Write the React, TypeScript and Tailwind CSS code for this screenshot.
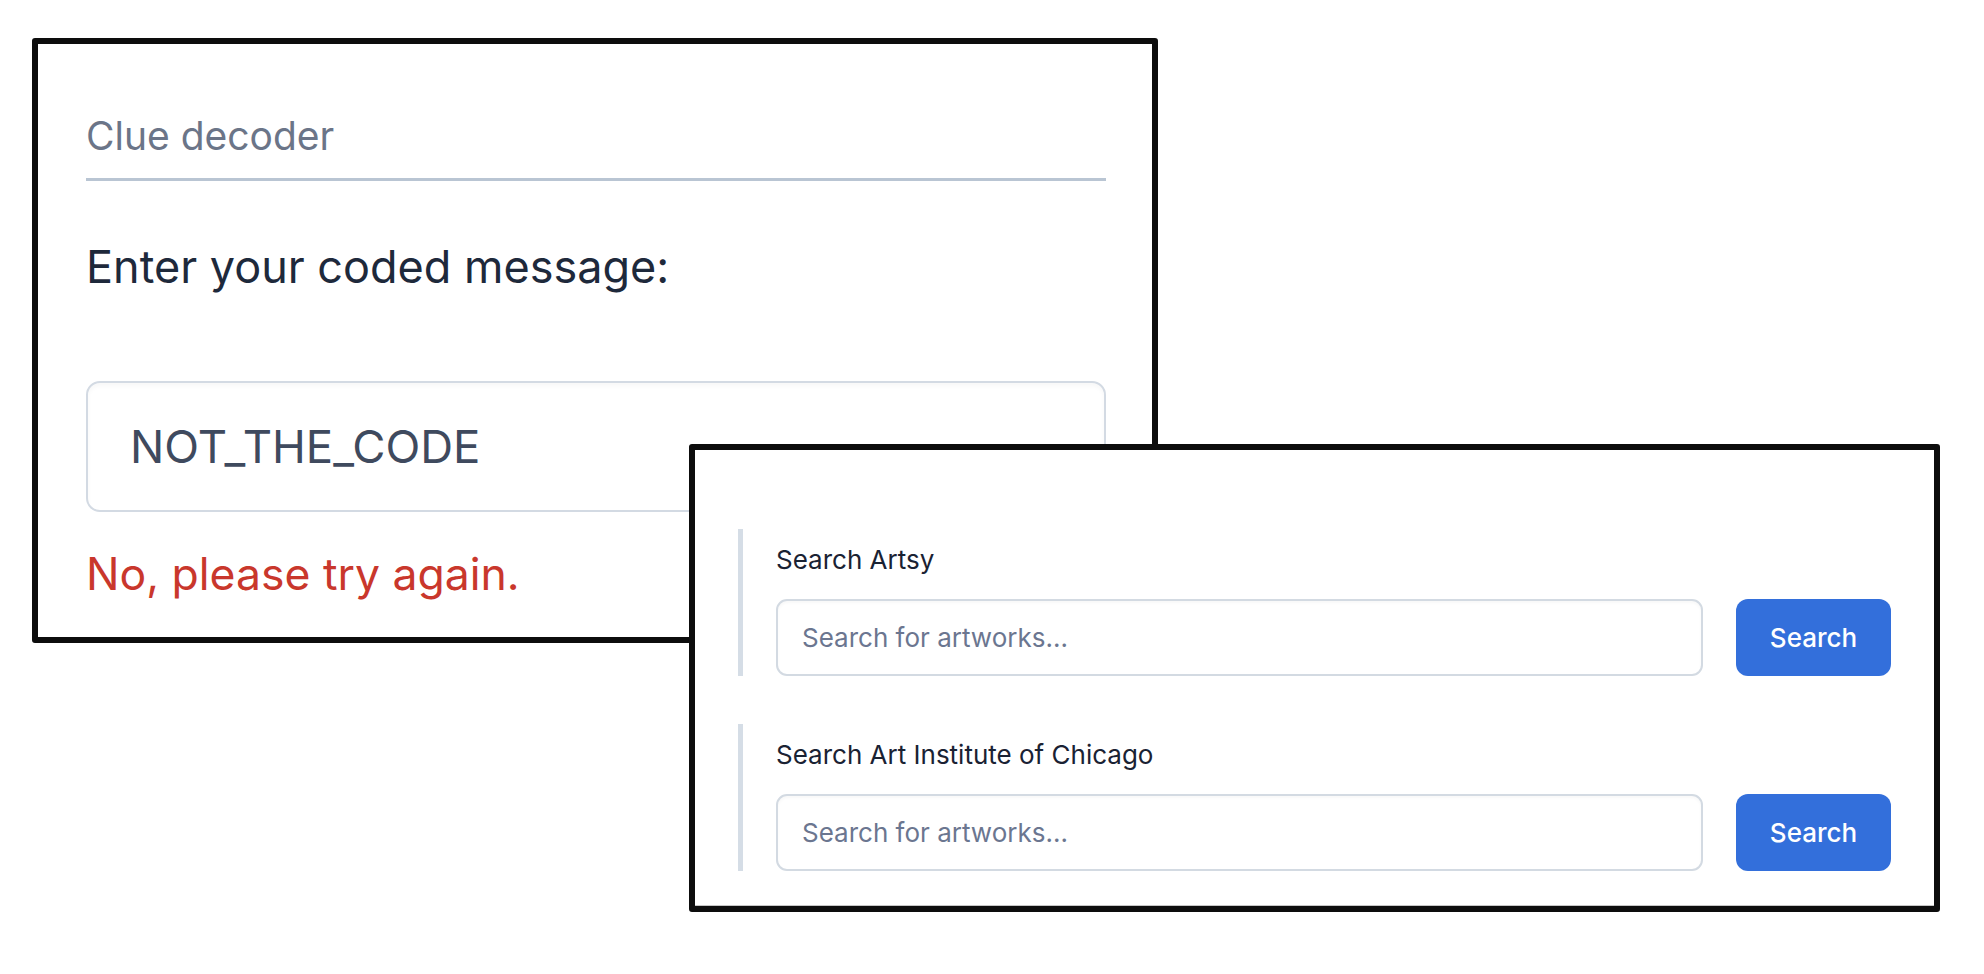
import React from "react"

const SearchGroup = ({ label }: { label: string }) => {
  return (
    <div className="flex">
      <div className="w-[5px] bg-[#d5dde6]" />
      <div className="flex-1 pl-[33px] pt-[15px]">
        <div className="text-[26px] leading-[32px] text-[#1a2233]">{label}</div>
        <div className="mt-[23px] flex gap-[33px]">
          <input
            type="text"
            placeholder="Search for artworks..."
            className="h-[77px] flex-1 rounded-[11px] border-2 border-[#d3dae2] bg-white pl-[24px] text-[26px] text-[#1a2233] shadow-[inset_0_2px_3px_rgba(0,0,0,0.03)] outline-none placeholder:text-[#6b7690]"
          />
          <button className="h-[77px] w-[155px] rounded-[12px] bg-[#336fdb] text-[26px] font-medium text-white">
            Search
          </button>
        </div>
      </div>
    </div>
  )
}

export default function App() {
  return (
    <div className="relative h-[974px] w-[1984px] overflow-hidden bg-white font-['Inter',sans-serif]">
      {/* clue decoder card */}
      <div className="ml-[32px] mt-[38px] h-[605px] w-[1126px] rounded-[3px] border-[6px] border-[#0d0d0d] bg-white pl-[48px] pr-[46px] pt-[68px]">
        <div className="border-b-[3px] border-[#b9c5d3] pb-[18px] text-[39px] leading-[48px] text-[#6b7588]">
          Clue decoder
        </div>
        <div className="mt-[60px] text-[45px] leading-[52px] text-[#1e293b]">Enter your coded message:</div>
        <input
          type="text"
          readOnly
          defaultValue="NOT_THE_CODE"
          className="mt-[88px] h-[131px] w-full rounded-[14px] border-2 border-[#d3dae3] bg-white pl-[42px] text-[45.5px] text-[#3f4a5e] shadow-[inset_0_3px_4px_rgba(0,0,0,0.03)] outline-none"
        />
        <div className="mt-[36px] text-[44.5px] leading-[52px] text-[#c9372c]">No, please try again.</div>
      </div>

      {/* search card, lies over the first one */}
      <div className="absolute left-[689px] top-[444px] h-[468px] w-[1251px] rounded-[3px] border-[6px] border-[#0d0d0d] bg-white">
        <div className="flex h-full flex-col gap-[48px] border-b border-[#c6c6c6] px-[43px] pt-[79px]">
          <SearchGroup label="Search Artsy" />
          <SearchGroup label="Search Art Institute of Chicago" />
        </div>
      </div>
    </div>
  )
}
